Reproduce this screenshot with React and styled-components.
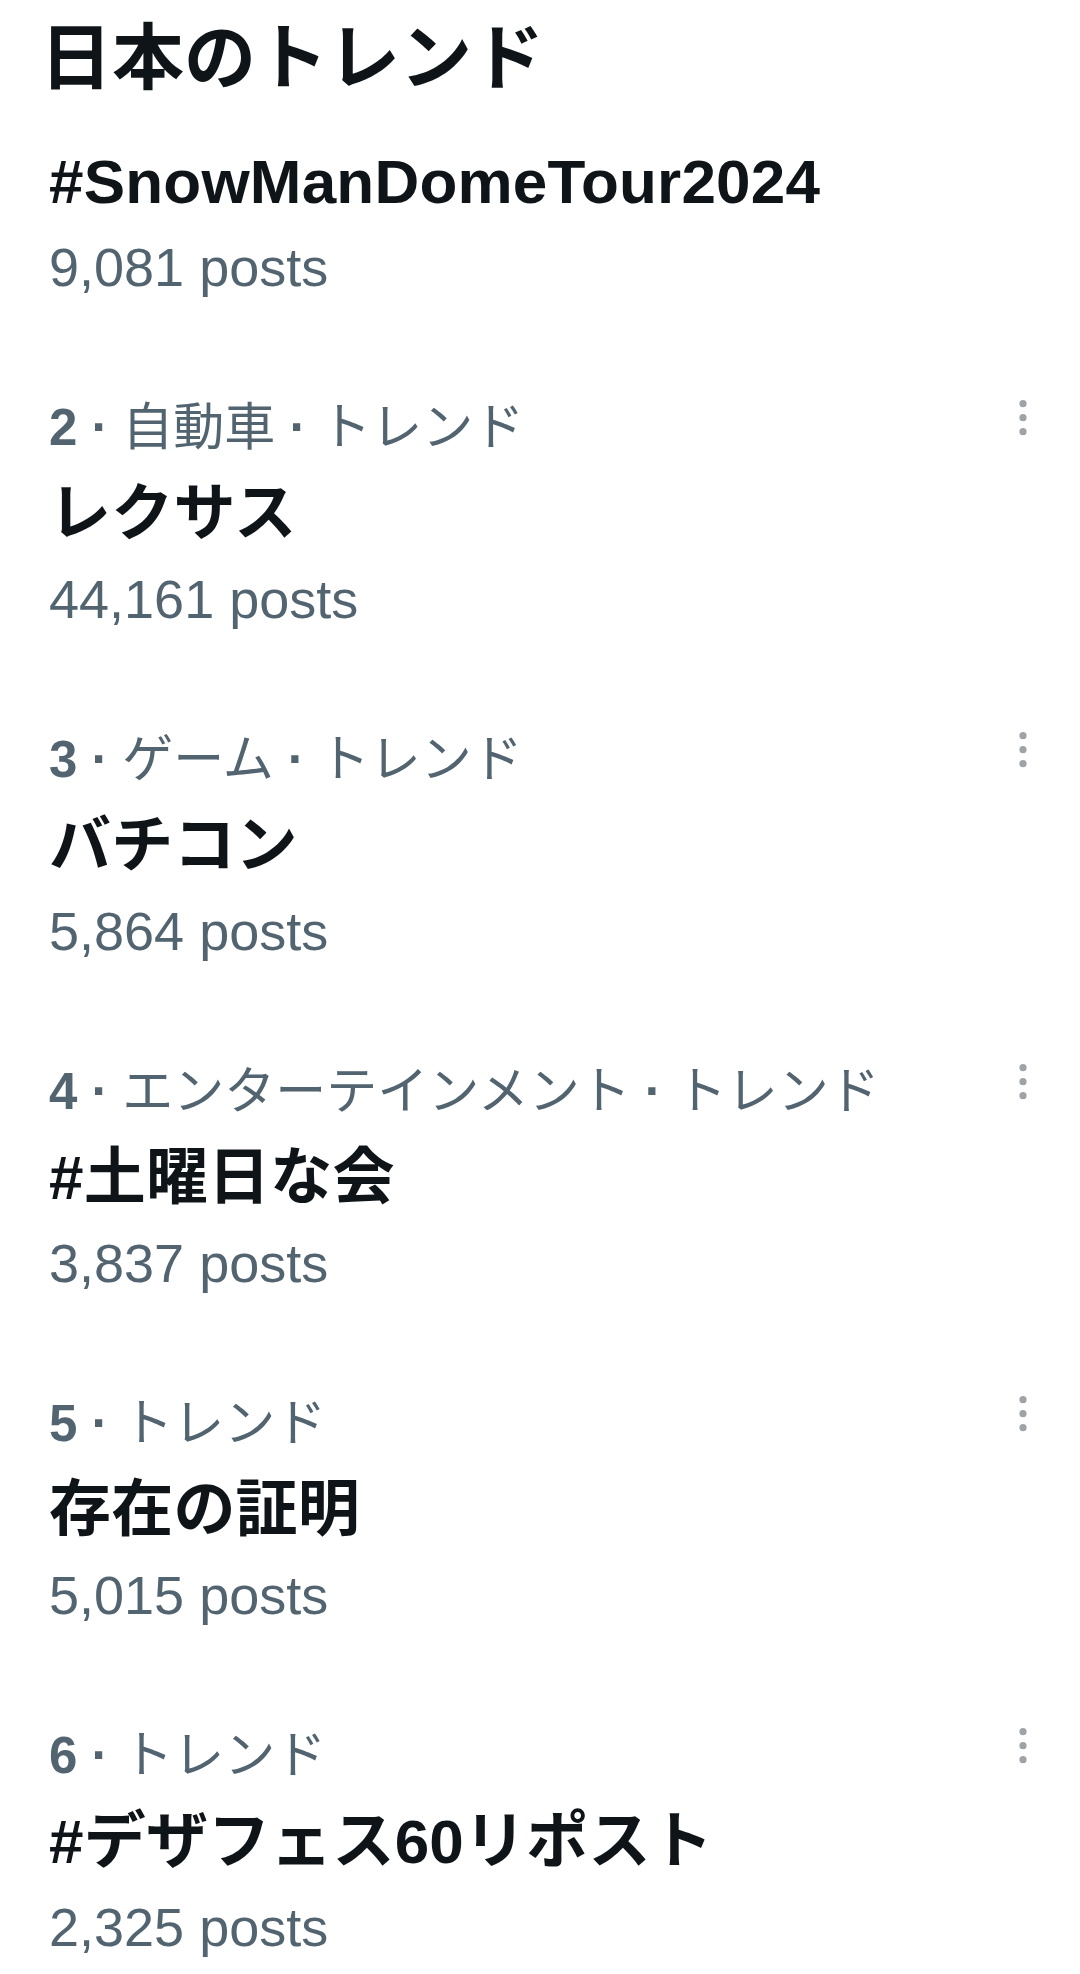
import styled, { createGlobalStyle } from "styled-components";

const GlobalStyle = createGlobalStyle`
  body {
    margin: 0;
    background: #ffffff;
    font-family: "Liberation Sans", "Noto Sans CJK JP", sans-serif;
    color: #0f1419;
  }
`;

const Page = styled.main`
  display: flex;
  flex-direction: column;
  width: 1080px;
`;

const Header = styled.h2`
  margin: 0 0 25px;
  padding-left: 40px;
  font-size: 72px;
  font-weight: 700;
  line-height: 116px;
  height: 113px;
`;

const Row = styled.article`
  display: flex;
  align-items: flex-start;
  padding: 0 37px 0 49px;
  margin-bottom: 70px;
`;

const Content = styled.div`
  flex: 1;
  min-width: 0;
`;

const Meta = styled.div`
  font-size: 51px;
  line-height: 84px;
  color: #536471;
  white-space: nowrap;
`;

const Rank = styled.span`
  font-weight: 700;
`;

const Sep = styled.span`
  padding: 0 14px;
  font-weight: 700;
`;

const Title = styled.div`
  font-size: 62px;
  font-weight: 700;
  line-height: 88px;
  letter-spacing: 0.2px;
  color: #0f1419;
  white-space: nowrap;
`;

const Posts = styled.div`
  font-size: 54px;
  line-height: 82px;
  margin-bottom: 8px;
  color: #536471;
`;

const MoreButton = styled.button`
  width: 40px;
  height: 63px;
  padding: 0;
  border: none;
  background: none;
  display: flex;
  align-items: center;
  justify-content: center;
  svg {
    display: block;
  }
`;

const trends = [
  { title: "#SnowManDomeTour2024", posts: "9,081" },
  { rank: 2, category: "自動車", title: "レクサス", posts: "44,161" },
  { rank: 3, category: "ゲーム", title: "バチコン", posts: "5,864" },
  { rank: 4, category: "エンターテインメント", title: "#土曜日な会", posts: "3,837" },
  { rank: 5, title: "存在の証明", posts: "5,015" },
  { rank: 6, title: "#デザフェス60リポスト", posts: "2,325" },
];

const MoreIcon = () => (
  <svg width="40" height="63" viewBox="0 0 40 63">
    <circle cx="20" cy="17.7" r="3.6" fill="#9ea3a8" />
    <circle cx="20" cy="31.7" r="3.6" fill="#9ea3a8" />
    <circle cx="20" cy="45.7" r="3.6" fill="#9ea3a8" />
  </svg>
);

const TrendRow = ({ rank, category, title, posts }) => (
  <Row>
    <Content>
      {rank && (
        <Meta>
          <Rank>{rank}</Rank>
          <Sep>·</Sep>
          {category && (
            <>
              {category}
              <Sep>·</Sep>
            </>
          )}
          トレンド
        </Meta>
      )}
      <Title>{title}</Title>
      <Posts>{posts} posts</Posts>
    </Content>
    {rank && (
      <MoreButton aria-label="その他">
        <MoreIcon />
      </MoreButton>
    )}
  </Row>
);

export default function App() {
  return (
    <>
      <GlobalStyle />
      <Page>
        <Header>日本のトレンド</Header>
        {trends.map((t) => (
          <TrendRow key={t.title} {...t} />
        ))}
      </Page>
    </>
  );
}
